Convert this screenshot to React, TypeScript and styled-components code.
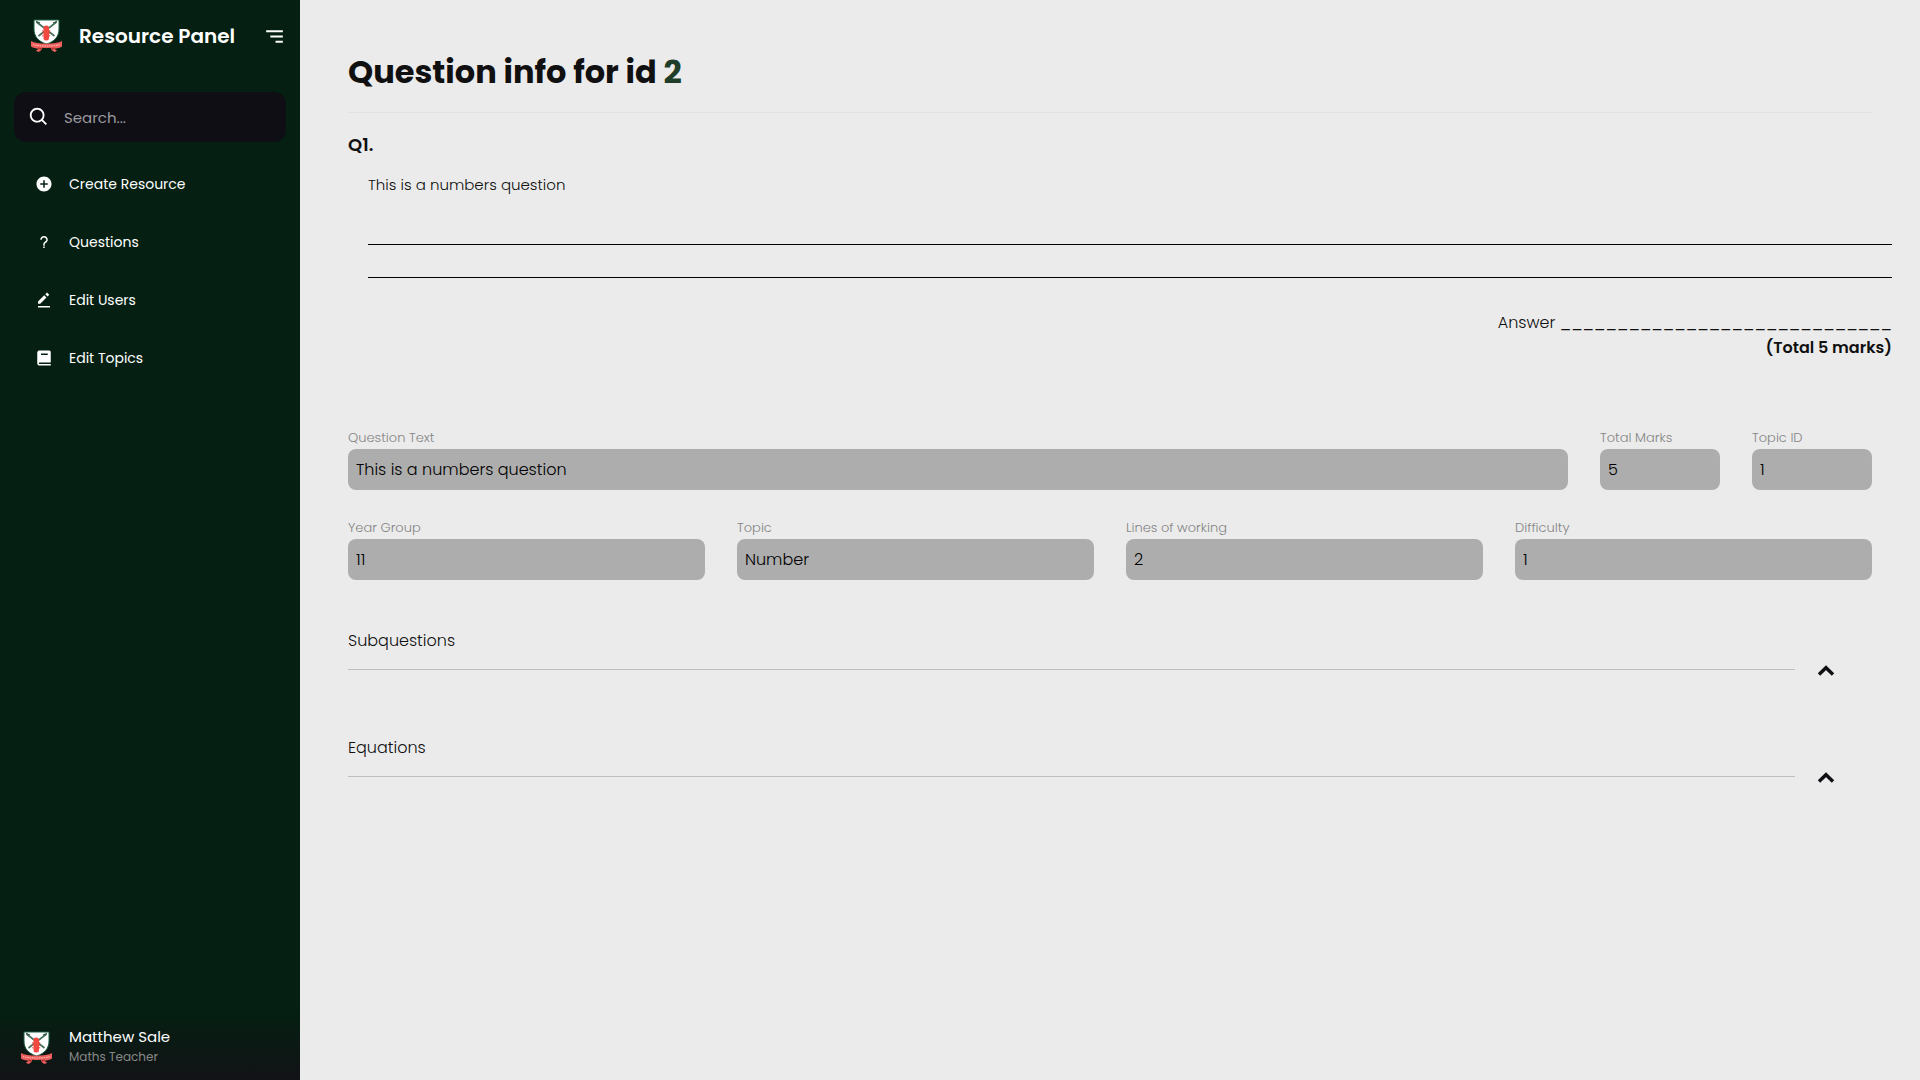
import React, { useState } from "react";
import styled, { createGlobalStyle } from "styled-components";
import {
  BiMenuAltRight,
  BiQuestionMark,
  BiSearch,
  BiSolidBook,
  BiSolidEditAlt,
  BiSolidPlusCircle,
} from "react-icons/bi";

const GlobalStyle = createGlobalStyle`
  *, *::before, *::after { box-sizing: border-box; }
  body {
    margin: 0;
    background: #ebebeb;
    color: #101010;
    font-family: Poppins, Inter, "Liberation Sans", sans-serif;
    font-size: 16px;
    font-weight: 300;
  }
  h1, h2, p, ul { margin: 0; padding: 0; }
  button, input { font: inherit; color: inherit; }
`;

const Page = styled.div`
  display: flex;
  min-height: 100vh;
`;

const Sidebar = styled.aside`
  display: flex;
  flex-direction: column;
  flex: 0 0 300px;
  min-width: 0;
  height: 100vh;
  background: #051f12;
  color: #ffffff;
`;

const Brand = styled.div`
  display: flex;
  align-items: center;
  height: 72px;
  padding: 0 13px 0 30px;
`;

const BrandName = styled.span`
  flex: 1;
  margin-left: 16px;
  font-size: 20px;
  font-weight: 600;
  white-space: nowrap;
`;

const IconButton = styled.button`
  display: flex;
  align-items: center;
  justify-content: center;
  padding: 0;
  border: 0;
  background: none;
  cursor: pointer;
`;

const Search = styled.label`
  display: flex;
  align-items: center;
  height: 50px;
  margin: 20px 14px 17px;
  border-radius: 12px;
  background: #100e15;
`;

const IconSlot = styled.span`
  display: flex;
  flex: 0 0 50px;
  align-items: center;
  justify-content: center;
`;

const SearchInput = styled.input`
  flex: 1;
  width: 100%;
  min-width: 0;
  height: 100%;
  padding: 0;
  border: 0;
  outline: 0;
  background: none;
  font-size: 15px;
  font-weight: 400;
  &::placeholder { color: #9b9b9f; opacity: 1; }
`;

const NavList = styled.ul`
  display: flex;
  flex-direction: column;
  gap: 8px;
  list-style: none;
`;

const NavLink = styled.a`
  display: flex;
  align-items: center;
  height: 50px;
  margin: 0 19px;
  color: #ffffff;
  font-size: 14px;
  font-weight: 400;
  text-decoration: none;
`;

const Profile = styled.div`
  display: flex;
  align-items: center;
  gap: 16px;
  height: 80px;
  margin-top: auto;
  padding: 16px 20px 0;
  background: linear-gradient(#051f12 15%, #121216);
`;

const ProfileText = styled.div`
  display: flex;
  flex-direction: column;
  padding-bottom: 2px;
  line-height: 20px;
`;

const ProfileName = styled.span`
  font-size: 15px;
  font-weight: 400;
`;

const ProfileRole = styled.span`
  color: #868887;
  font-size: 12px;
  font-weight: 400;
`;

const Content = styled.main`
  flex: 1;
  min-width: 0;
  padding: 48px;
`;

const Title = styled.h1`
  padding-bottom: 16px;
  border-bottom: 1px solid #e1e1e1;
  font-size: 32px;
  font-weight: 700;
  line-height: 48px;
`;

const TitleId = styled.span`
  color: #1f3d28;
`;

const QuestionNumber = styled.h2`
  margin-top: 16px;
  font-size: 18px;
  font-weight: 600;
  line-height: 32px;
`;

/* The printed preview is indented but keeps the full column width. */
const Preview = styled.section`
  width: 100%;
  margin-left: 20px;
`;

const PreviewText = styled.p`
  padding: 12px 0 47px;
  font-size: 15px;
  line-height: 24px;
`;

const WorkingLine = styled.div`
  height: 1px;
  margin-bottom: 32px;
  background: #000000;
`;

const AnswerLine = styled.p`
  text-align: right;
  line-height: 25px;
  white-space: nowrap;
`;

const AnswerBlank = styled.span`
  font-size: 17px;
`;

const TotalMarks = styled.p`
  font-weight: 600;
  line-height: 25px;
  text-align: right;
`;

const Form = styled.form`
  display: grid;
  gap: 26px;
  margin-top: 66px;
`;

const FieldRow = styled.div<{ $columns: string }>`
  display: grid;
  grid-template-columns: ${(p) => p.$columns};
  gap: 32px;
`;

const FieldBox = styled.label`
  display: flex;
  flex-direction: column;
  min-width: 0;
  color: #858585;
  font-size: 13px;
  line-height: 23px;
`;

const FieldInput = styled.input`
  width: 100%;
  height: 41px;
  padding: 0 8px;
  border: 0;
  border-radius: 8px;
  background: #adadad;
  color: #000000;
  font-size: 16px;
`;

const Sections = styled.div`
  display: grid;
  gap: 51px;
  margin-top: 45px;
`;

const SectionBox = styled.section`
  display: grid;
  grid-template-columns: 1fr 77px;
  align-items: center;
`;

const SectionTitle = styled.h2`
  grid-column: 1 / -1;
  font-size: 16px;
  font-weight: 300;
  line-height: 32px;
`;

const Divider = styled.hr`
  width: 100%;
  margin: 0;
  border: 0;
  border-top: 1px solid #bfbfbf;
`;

const Toggle = styled(IconButton)`
  width: 62px;
  height: 24px;
  padding-top: 4px;
`;

function Crest() {
  return (
    <svg width="33" height="34" viewBox="0 0 33 34" aria-hidden="true">
      <path d="M4 1h25v9c0 7-4 12.500-12.500 15C8 22.500 4 17 4 10z" fill="#fff" stroke="#1d6044" strokeWidth="1" />
      <path d="M6.500 3l18 14M26.500 3l-18 14" stroke="#44705a" strokeWidth="1.600" fill="none" />
      <path d="M6 2.500l4 1.500M27 2.500L23 4" stroke="#264f3b" strokeWidth="1.200" />
      <rect x="13.500" y="6.500" width="5.500" height="15" rx="2.500" fill="#f1483f" />
      <path d="M12.800 11v7M19.700 11v7" stroke="#f1483f" strokeWidth="1" strokeDasharray="1.500 1" />
      <path d="M1 22c5 3.500 26 3.500 31 0v5.500c-2 1.500-5 2-8 2.300l3 1.700-2 1.500c-2-.5-3.500-1.500-4.500-4-2 .4-6 .4-8 0-1 2.500-2.500 3.500-4.500 4l-2-1.500 3-1.700c-3-.3-6-.8-8-2.300z" fill="#ed5f5c" />
      <path d="M8 28.500l4 .8-1.500 1.700zM25 28.500l-4 .8 1.500 1.700z" fill="#a92f31" />
      <path d="M12 28.800c3 .6 6 .6 9 0l-1.500 2.700c-2-.5-4-.5-6 0z" fill="#051f12" />
      <path d="M3 25.500c6 2 21 2 27 0" fill="none" stroke="#f8b5b0" strokeWidth="1.200" strokeDasharray="1.500 .8" />
    </svg>
  );
}

function ChevronUp({ open }: { open: boolean }) {
  return (
    <svg width="18" height="12" viewBox="0 0 18 12" aria-hidden="true">
      <path
        d={open ? "M2 9.500L9 2.700l7 6.800" : "M2 2.700L9 9.500l7-6.800"}
        fill="none"
        stroke="#101014"
        strokeWidth="3.400"
      />
    </svg>
  );
}

const NAV = [
  { label: "Create Resource", Icon: BiSolidPlusCircle },
  { label: "Questions", Icon: BiQuestionMark },
  { label: "Edit Users", Icon: BiSolidEditAlt },
  { label: "Edit Topics", Icon: BiSolidBook },
];

function Field({ label, value }: { label: string; value: string }) {
  return (
    <FieldBox>
      {label}
      <FieldInput type="text" defaultValue={value} />
    </FieldBox>
  );
}

function Section({ title }: { title: string }) {
  const [open, setOpen] = useState(true);
  return (
    <SectionBox>
      <SectionTitle>{title}</SectionTitle>
      <Divider />
      <Toggle type="button" aria-label={title} aria-expanded={open} onClick={() => setOpen(!open)}>
        <ChevronUp open={open} />
      </Toggle>
    </SectionBox>
  );
}

export default function App() {
  return (
    <>
      <GlobalStyle />
      <Page>
        <Sidebar>
          <Brand>
            <Crest />
            <BrandName>Resource Panel</BrandName>
            <IconButton type="button" aria-label="Menu">
              <BiMenuAltRight size={25} />
            </IconButton>
          </Brand>
          <Search>
            <IconSlot>
              <BiSearch size={22} />
            </IconSlot>
            <SearchInput type="text" placeholder="Search..." aria-label="Search" />
          </Search>
          <nav>
            <NavList>
              {NAV.map(({ label, Icon }) => (
                <li key={label}>
                  <NavLink href="#">
                    <IconSlot>
                      <Icon size={18} />
                    </IconSlot>
                    {label}
                  </NavLink>
                </li>
              ))}
            </NavList>
          </nav>
          <Profile>
            <Crest />
            <ProfileText>
              <ProfileName>Matthew Sale</ProfileName>
              <ProfileRole>Maths Teacher</ProfileRole>
            </ProfileText>
          </Profile>
        </Sidebar>
        <Content>
          <Title>
            Question info for id <TitleId>2</TitleId>
          </Title>
          <QuestionNumber>Q1.</QuestionNumber>
          <Preview>
            <PreviewText>This is a numbers question</PreviewText>
            <WorkingLine />
            <WorkingLine />
            <AnswerLine>
              Answer <AnswerBlank>{"_".repeat(29)}</AnswerBlank>
            </AnswerLine>
            <TotalMarks>(Total 5 marks)</TotalMarks>
          </Preview>
          <Form>
            <FieldRow $columns="1fr 120px 120px">
              <Field label="Question Text" value="This is a numbers question" />
              <Field label="Total Marks" value="5" />
              <Field label="Topic ID" value="1" />
            </FieldRow>
            <FieldRow $columns="repeat(4, 1fr)">
              <Field label="Year Group" value="11" />
              <Field label="Topic" value="Number" />
              <Field label="Lines of working" value="2" />
              <Field label="Difficulty" value="1" />
            </FieldRow>
          </Form>
          <Sections>
            <Section title="Subquestions" />
            <Section title="Equations" />
          </Sections>
        </Content>
      </Page>
    </>
  );
}
